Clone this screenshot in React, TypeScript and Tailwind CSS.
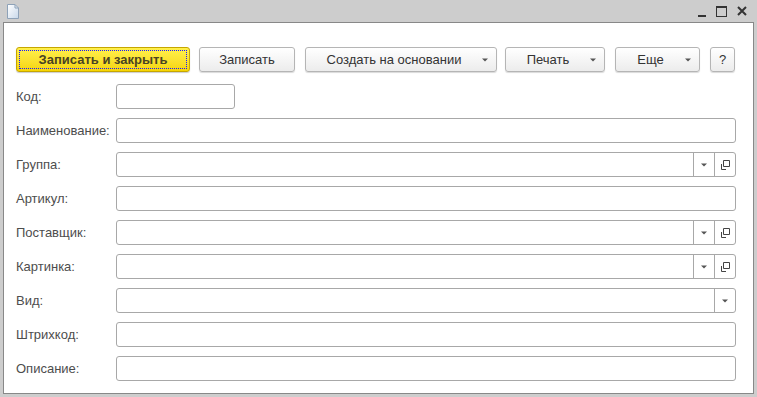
const font = { fontFamily: '"Liberation Sans", Arial, sans-serif' };

function Caret() {
  return (
    <svg width="6" height="4" viewBox="0 0 6 4" className="shrink-0">
      <path d="M0 0.5h6L3 3.5z" fill="#555" />
    </svg>
  );
}

function Btn({ label, w, arrow, className = "" }: { label: string; w: string; arrow?: boolean; className?: string }) {
  return (
    <div
      className={`${w} ${className} h-[25px] flex items-center rounded-[3px] border border-[#b5b5b5] bg-gradient-to-b from-white to-[#ececec] shadow-[0_1px_1px_rgba(0,0,0,0.15)] text-[13px] text-[#333]`}
    >
      <span className="flex-1 text-center">{label}</span>
      {arrow && <span className="pr-[8px] flex items-center"><Caret /></span>}
    </div>
  );
}

type Row = { label: string; kind: "short" | "text" | "select" | "selectOpen" };

const rows: Row[] = [
  { label: "Код:", kind: "short" },
  { label: "Наименование:", kind: "text" },
  { label: "Группа:", kind: "selectOpen" },
  { label: "Артикул:", kind: "text" },
  { label: "Поставщик:", kind: "selectOpen" },
  { label: "Картинка:", kind: "selectOpen" },
  { label: "Вид:", kind: "select" },
  { label: "Штрихкод:", kind: "text" },
  { label: "Описание:", kind: "text" },
];

function OpenIcon() {
  return (
    <svg width="10" height="10" viewBox="0 0 10 10">
      <path d="M3.5 0.5h6v6h-6z" fill="none" stroke="#444" />
      <path d="M1.5 4v5.5H6" fill="none" stroke="#444" />
    </svg>
  );
}

function Field({ kind }: { kind: Row["kind"] }) {
  if (kind === "short") {
    return <div className="w-[119px] h-[25px] rounded-[3px] border border-[#a8a8a8] bg-white" />;
  }
  return (
    <div className="flex-1 h-[25px] rounded-[3px] border border-[#a8a8a8] bg-white flex">
      <div className="flex-1" />
      {(kind === "select" || kind === "selectOpen") && (
        <div className="w-[21px] border-l border-[#a8a8a8] flex items-center justify-center">
          <Caret />
        </div>
      )}
      {kind === "selectOpen" && (
        <div className="w-[21px] border-l border-[#a8a8a8] flex items-center justify-center">
          <OpenIcon />
        </div>
      )}
    </div>
  );
}

export default function App() {
  return (
    <div className="w-[757px] h-[397px] bg-[#cdcdcd] flex flex-col" style={font}>
      <div className="h-[22px] flex items-center px-[7px]">
        <svg width="12" height="15" viewBox="0 0 12 15" className="mt-[1px]">
          <defs>
            <linearGradient id="doc" x1="0" y1="0" x2="1" y2="1">
              <stop offset="0" stopColor="#ffffff" />
              <stop offset="1" stopColor="#c8d8ea" />
            </linearGradient>
          </defs>
          <path d="M0.5 0.5h7.5l3.5 3.5v10.5h-11z" fill="url(#doc)" stroke="#8ea2b8" />
          <path d="M8 0.5v3.5h3.5" fill="none" stroke="#8ea2b8" />
        </svg>
        <div className="flex-1" />
        <div className="flex items-center gap-[10px] pr-[3px]">
          <div className="w-[8px] h-[11px] flex items-end">
            <div className="w-[8px] h-[2px] bg-[#333]" />
          </div>
          <div className="w-[11px] h-[11px] border border-[#333] border-t-2" />
          <svg width="10" height="10" viewBox="0 0 10 10">
            <path d="M1 1l8 8M9 1l-8 8" stroke="#333" strokeWidth="2" />
          </svg>
        </div>
      </div>
      <div className="flex-1 mx-[3px] mb-[3px] border border-[#888] bg-white pl-[12px] pr-[17px] pt-[24px]">
        <div className="flex items-center">
          <div className="w-[174px] h-[25px] rounded-[3px] border border-[#c6a600] bg-gradient-to-b from-[#fff04a] to-[#f6d500] shadow-[0_1px_1px_rgba(0,0,0,0.2)] p-[2px]">
            <div className="h-full border border-dotted border-[#1a1aff] flex items-center justify-center text-[13px] font-bold text-[#4a4422]">
              Записать и закрыть
            </div>
          </div>
          <Btn label="Записать" w="w-[96px]" className="ml-[9px]" />
          <Btn label="Создать на основании" w="w-[192px]" className="ml-[10px]" arrow />
          <Btn label="Печать" w="w-[100px]" className="ml-[8px]" arrow />
          <Btn label="Еще" w="w-[85px]" className="ml-[10px]" arrow />
          <Btn label="?" w="w-[25px]" className="ml-[10px]" />
        </div>
        <div className="mt-[12px] flex flex-col gap-[9px]">
          {rows.map((r) => (
            <div key={r.label} className="flex items-center">
              <div className="w-[100px] text-[13px] text-[#4d4d4d]">{r.label}</div>
              <Field kind={r.kind} />
            </div>
          ))}
        </div>
      </div>
    </div>
  );
}
